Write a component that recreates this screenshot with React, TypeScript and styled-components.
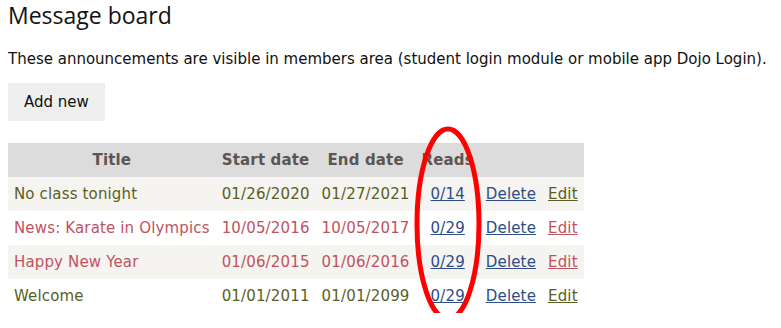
import React from 'react';
import styled, { createGlobalStyle } from 'styled-components';

const Global = createGlobalStyle`
    body {
        margin: 0 8px 8px;
        font-family: "DejaVu Sans", Verdana, sans-serif;
        background: #fff;
        color: #111;
    }
`;

const Page = styled.div`
    position: relative;
`;

const Heading = styled.h1`
    margin: 0;
    font-family: "Open Sans", "Noto Sans", sans-serif;
    font-weight: 400;
    font-size: 23px;
    line-height: 31px;
    color: #111;
`;

const Intro = styled.p`
    margin: 18px 0 14px;
    font-size: 15px;
    line-height: 20px;
`;

const AddButton = styled.button`
    font-family: "DejaVu Sans", Verdana, sans-serif;
    font-size: 15px;
    background: #efefef;
    border: none;
    padding: 0 16px;
    height: 38px;
    color: #111;
`;

const Table = styled.table`
    margin-top: 22px;
    border-collapse: collapse;
    font-size: 15px;
    letter-spacing: 0.15px;
`;

const Th = styled.th`
    background: #dcdcdc;
    color: #5d5552;
    font-weight: bold;
    height: 34px;
    padding: 0 6px;
    text-align: center;
`;

const Row = styled.tr<{ $striped: boolean; $tone: string }>`
    background: ${(p) => (p.$striped ? '#f5f4f0' : '#fff')};
    color: ${(p) => p.$tone};
`;

const Td = styled.td<{ $center?: boolean }>`
    height: 34px;
    padding: 0 6px;
    white-space: nowrap;
    text-align: ${(p) => (p.$center ? 'center' : 'left')};
`;

const Link = styled.a<{ $tone?: string }>`
    color: ${(p) => p.$tone ?? '#2d4d86'};
    text-decoration: underline;
    cursor: pointer;
`;

const Mark = styled.svg`
    position: absolute;
    left: 398px;
    top: 122px;
    pointer-events: none;
`;

const OLIVE = '#5a5e22';
const ROSE = '#c0535e';

const messages = [
    { title: 'No class tonight', start: '01/26/2020', end: '01/27/2021', reads: '0/14', tone: OLIVE },
    { title: 'News: Karate in Olympics', start: '10/05/2016', end: '10/05/2017', reads: '0/29', tone: ROSE },
    { title: 'Happy New Year', start: '01/06/2015', end: '01/06/2016', reads: '0/29', tone: ROSE },
    { title: 'Welcome', start: '01/01/2011', end: '01/01/2099', reads: '0/29', tone: OLIVE },
];

export default function App() {
    return (
        <>
            <Global />
            <Page>
                <Heading>Message board</Heading>
                <Intro>
                    These announcements are visible in members area (student login module or mobile app Dojo Login).
                </Intro>
                <AddButton>Add new</AddButton>
                <Table>
                    <thead>
                        <tr>
                            <Th>Title</Th>
                            <Th>Start date</Th>
                            <Th>End date</Th>
                            <Th>Reads</Th>
                            <Th />
                            <Th />
                        </tr>
                    </thead>
                    <tbody>
                        {messages.map((m, i) => (
                            <Row key={m.title} $striped={i % 2 === 0} $tone={m.tone}>
                                <Td>{m.title}</Td>
                                <Td>{m.start}</Td>
                                <Td>{m.end}</Td>
                                <Td $center>
                                    <Link>{m.reads}</Link>
                                </Td>
                                <Td>
                                    <Link>Delete</Link>
                                </Td>
                                <Td>
                                    <Link $tone={m.tone}>Edit</Link>
                                </Td>
                            </Row>
                        ))}
                    </tbody>
                </Table>
                <Mark width="84" height="204" viewBox="0 0 84 204">
                    <ellipse cx="42" cy="102" rx="31" ry="95" fill="none" stroke="#ff0000" strokeWidth="5" />
                </Mark>
            </Page>
        </>
    );
}
